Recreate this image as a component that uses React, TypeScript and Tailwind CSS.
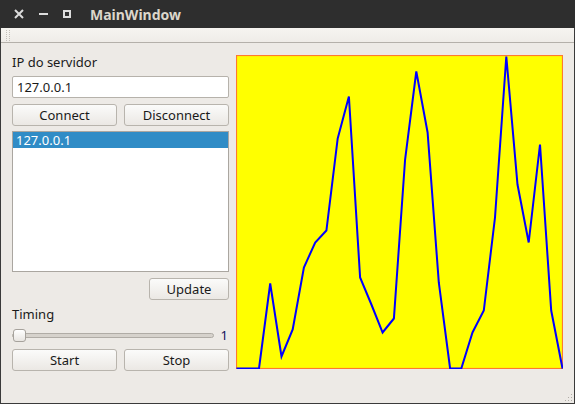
import React from "react";

const ys = [313, 313, 313, 228, 301, 274, 212, 187, 175, 83, 41, 222, 249, 277, 263, 104, 16, 77, 227, 313, 313, 277, 255, 162, 1, 129, 187, 89, 255, 313];

function PushButton({ label, className = "" }: { label: string; className?: string }) {
  return (
    <button
      className={`h-[22px] rounded-[3px] border border-[#b8b4ad] bg-gradient-to-b from-[#fbfbfa] to-[#ebe8e4] text-[13px] leading-none text-[#1a1a1a] ${className}`}
    >
      {label}
    </button>
  );
}

function Plot() {
  const points = ys.map((y, i) => `${(i * 11.24 + 0.5).toFixed(1)},${y + 0.5}`).join(" ");
  return (
    <div className="w-[327px] h-[314px] bg-[#ffff00]">
      <svg width="327" height="314" viewBox="0 0 327 314">
        <rect x="0.5" y="0.5" width="326" height="313" fill="none" stroke="#ff7a2e" strokeWidth="1.2" />
        <polyline points={points} fill="none" stroke="#0000ff" strokeWidth="2" strokeLinejoin="miter" />
      </svg>
    </div>
  );
}

function TitleBar() {
  return (
    <div className="h-[28px] bg-[#2e2e2e] flex items-center text-[#dcdcdc]">
      <svg width="10" height="10" viewBox="0 0 10 10" className="ml-[14px]">
        <path d="M1 1 L9 9 M9 1 L1 9" stroke="#dcdcdc" strokeWidth="2" />
      </svg>
      <div className="ml-[15px] w-[9px] h-[2px] bg-[#dcdcdc]" />
      <div className="ml-[15px] w-[8px] h-[8px] border-2 border-[#dcdcdc]" />
      <span className="ml-[19px] text-[14px] font-bold text-[#dcd6ca]">MainWindow</span>
    </div>
  );
}

export default function App() {
  return (
    <div className="w-[575px] h-[404px] flex flex-col bg-[#edeae6]" style={{ fontFamily: "'Noto Sans', 'DejaVu Sans', sans-serif" }}>
      <TitleBar />
      <div className="flex-1 flex flex-col border-x border-b border-[#3a3a3a]">
        <div className="h-[15px] bg-gradient-to-b from-[#f6f4f0] to-[#efece8] border-b border-[#b4b0aa] flex items-center pl-[5px]">
          <div className="flex flex-col gap-[1px]">
            {[0, 1, 2, 3, 4, 5].map((i) => (
              <div key={i} className="flex gap-[2px]">
                <div className="w-[1px] h-[1px] bg-[#c4c0ba]" />
                <div className="w-[1px] h-[1px] bg-[#c4c0ba]" />
              </div>
            ))}
          </div>
        </div>
        <div className="flex-1 flex relative">
          <div className="w-[217px] ml-[11px] flex flex-col text-[13px] text-[#1a1a1a]">
            <div className="mt-[11px] h-[16px] leading-[16px]">IP do servidor</div>
            <div className="mt-[6px] h-[22px] rounded-[2px] border border-[#b6b2ab] bg-white px-[4px] leading-[20px]">127.0.0.1</div>
            <div className="mt-[6px] flex gap-[7px]">
              <PushButton label="Connect" className="flex-1" />
              <PushButton label="Disconnect" className="flex-1" />
            </div>
            <div className="mt-[5px] h-[141px] border border-[#aaa6a0] bg-white">
              <div className="h-[16px] bg-[#308cc6] text-white px-[3px] leading-[16px]">127.0.0.1</div>
            </div>
            <div className="mt-[6px] flex justify-end">
              <PushButton label="Update" className="w-[80px]" />
            </div>
            <div className="mt-[6px] h-[16px] leading-[16px]">Timing</div>
            <div className="mt-[6px] h-[15px] flex items-center">
              <div className="relative flex-1 h-[15px] flex items-center mr-[7px]">
                <div className="w-full h-[5px] rounded-full border border-[#b0aca6] bg-[#d6d2cc]" />
                <div className="absolute left-[1px] top-[1px] w-[13px] h-[13px] rounded-[3px] border border-[#a6a29c] bg-gradient-to-b from-white to-[#e8e5e1]" />
              </div>
              <span className="text-[#10105a] mr-[1px]">1</span>
            </div>
            <div className="mt-[6px] flex gap-[7px]">
              <PushButton label="Start" className="flex-1" />
              <PushButton label="Stop" className="flex-1" />
            </div>
          </div>
          <div className="ml-[7px] mt-[12px]">
            <Plot />
          </div>
          <div className="absolute right-[2px] bottom-[2px] grid grid-cols-3 gap-[2px]">
            {[0, 0, 1, 0, 1, 1, 1, 1, 1].map((v, i) => (
              <div key={i} className={`w-[1px] h-[1px] ${v ? "bg-[#b0aca6]" : ""}`} />
            ))}
          </div>
        </div>
      </div>
    </div>
  );
}
